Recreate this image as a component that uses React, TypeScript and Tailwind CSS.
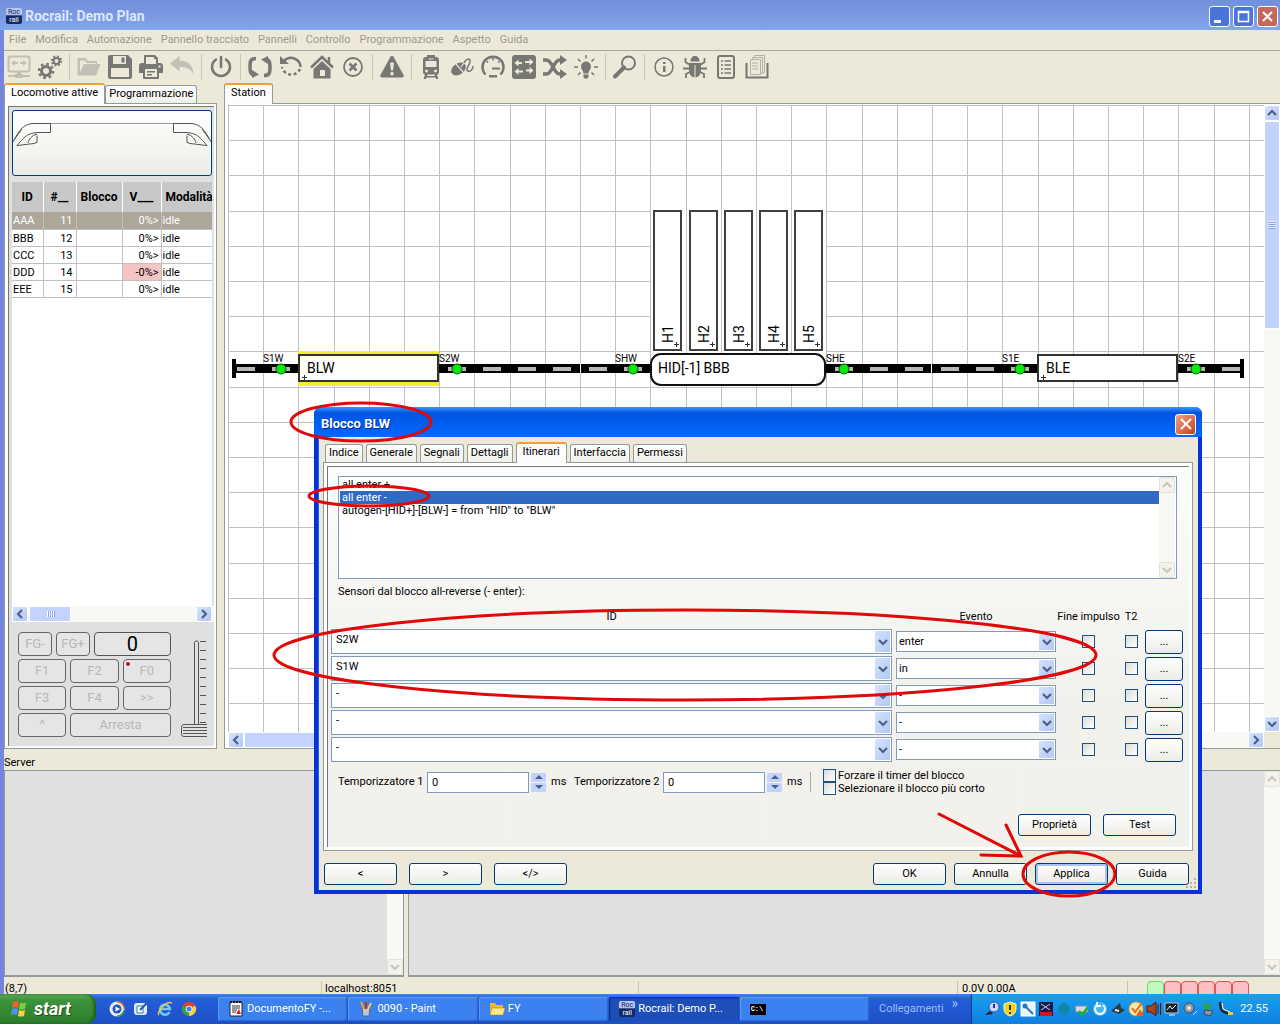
import { useState } from "react";
import type { ReactNode } from "react";

const MENUS = ["File", "Modifica", "Automazione", "Pannello tracciato", "Pannelli", "Controllo", "Programmazione", "Aspetto", "Guida"];

const LOCOS = [
  { id: "AAA", addr: 11, v: "0%>", mode: "idle" },
  { id: "BBB", addr: 12, v: "0%>", mode: "idle" },
  { id: "CCC", addr: 13, v: "0%>", mode: "idle" },
  { id: "DDD", addr: 14, v: "-0%>", mode: "idle" },
  { id: "EEE", addr: 15, v: "0%>", mode: "idle" },
];

const ROUTES = ["all enter +", "all enter -", 'autogen-[HID+]-[BLW-] = from "HID" to "BLW"'];

const SENSORS = [
  { id: "S2W", event: "enter" },
  { id: "S1W", event: "in" },
  { id: "-", event: "-" },
  { id: "-", event: "-" },
  { id: "-", event: "-" },
];

const CELL = 35.2;

/* ---------- toolbar ---------- */

type Tool = { name: string; dim?: boolean; art: ReactNode };

const TOOLS: (Tool | null)[] = [
  {
    name: "Connetti",
    dim: true,
    art: (
      <>
        <rect x="1.5" y="1.5" width="21" height="15" rx="2" fill="none" stroke="currentColor" strokeWidth="2" />
        <path d="M4 8l4-3v2h3v2H8v2zM20 8l-4-3v2h-3v2h3v2zM10 17h4v3h-4zM1 20h22v2H1zM8 19h8v4H8z" />
      </>
    ),
  },
  {
    name: "Impostazioni",
    art: (
      <>
        <circle cx="8" cy="16" r="4.5" fill="none" stroke="currentColor" strokeWidth="3" />
        <circle cx="8" cy="16" r="7" fill="none" stroke="currentColor" strokeWidth="2.5" strokeDasharray="2.7 2.8" />
        <circle cx="18.5" cy="6" r="3" fill="none" stroke="currentColor" strokeWidth="2" />
        <circle cx="18.5" cy="6" r="4.6" fill="none" stroke="currentColor" strokeWidth="2" strokeDasharray="1.8 1.8" />
      </>
    ),
  },
  null,
  {
    name: "Apri",
    dim: true,
    art: <path d="M2 3h7l2 3h9v3h-1.5V8H9.500L8 5.500H3v12l4-8.500h16.500L19 20.500H2A1.500 1.500 0 0 1 .5 19V4.500A1.500 1.500 0 0 1 2 3z" />,
  },
  {
    name: "Salva",
    art: (
      <path
        fillRule="evenodd"
        d="M2 0h18l4 4v18a2 2 0 0 1-2 2H2a2 2 0 0 1-2-2V2a2 2 0 0 1 2-2zM5 1v8h13V1zM3 13v9h18v-9zM13.5 2.5h3v5h-3z"
      />
    ),
  },
  {
    name: "Stampa",
    art: (
      <path
        fillRule="evenodd"
        d="M6 0h10l3 3v5h2a3 3 0 0 1 3 3v7h-4v5a1 1 0 0 1-1 1H5a1 1 0 0 1-1-1v-5H0v-7a3 3 0 0 1 3-3h2V1a1 1 0 0 1 1-1zM7 2v7h10V4h-2V2zM6 14v8h12v-8zM8 16h8v1.5H8zM8 19h5v1.5H8zM19.5 10.5v2h2v-2z"
      />
    ),
  },
  { name: "Annulla modifica", dim: true, art: <path d="M0 8.5L9.500 1v4.500C18 6 23 10 23.500 19 20 13 16 12 9.500 12v4.500z" /> },
  null,
  {
    name: "Alimentazione",
    art: (
      <g fill="none" stroke="currentColor" strokeWidth="2.5" strokeLinecap="round">
        <path d="M12 2v10M7 4.500a9 9 0 1 0 10 0" />
      </g>
    ),
  },
  null,
  {
    name: "Modalità automatica",
    art: (
      <>
        <path d="M8 3.500C2.500 3.500 2 6 2 12s1 7 4 8M16 20.500c5.500 0 6-2.500 6-8.500s-1-7-4-8" fill="none" stroke="currentColor" strokeWidth="3.5" />
        <path d="M4 15v8l7-3.500zM20 1v8l-7-4.500z" />
      </>
    ),
  },
  {
    name: "Ripristina",
    art: (
      <>
        <path d="M5 6a9.500 9.500 0 0 1 16.500 6" fill="none" stroke="currentColor" strokeWidth="2.5" />
        <path d="M21 14a9.500 9.500 0 0 1-18-2" fill="none" stroke="currentColor" strokeWidth="2.5" strokeDasharray="3 2.5" />
        <path d="M1 1v8h9z" />
      </>
    ),
  },
  {
    name: "Casa",
    art: (
      <>
        <path d="M1 12.500L12 2l11 10.500M19 8V2" fill="none" stroke="currentColor" strokeWidth="2.5" />
        <path fillRule="evenodd" d="M12 6l8.500 8v9.500h-17V14zM10 15v6h5v-6z" />
      </>
    ),
  },
  {
    name: "Ferma",
    art: (
      <g fill="none" stroke="currentColor" strokeWidth="1.8">
        <circle cx="12" cy="12" r="9" />
        <path d="M8.500 8.500l7 7M15.500 8.500l-7 7" strokeWidth="2.5" />
      </g>
    ),
  },
  null,
  {
    name: "Emergenza",
    art: (
      <path
        fillRule="evenodd"
        d="M12 1c1 0 1.500.5 2 1.500L23.500 20c.7 1.500 0 2.500-1.500 2.500H2C.5 22.500-.2 21.500.5 20L10 2.500C10.500 1.500 11 1 12 1zM10 7.500l1 8h2l1-8zM12 17a1.700 1.700 0 1 0 .01 0z"
      />
    ),
  },
  null,
  {
    name: "Locomotive",
    art: (
      <path
        fillRule="evenodd"
        d="M8 0h8v2h1.500c1.500 0 2.500 1 2.500 3v13l-2 2 1.500 4H17l-.5-1.500h-9L7 24H4.500L6 20l-2-2V5c0-2 1-3 2.500-3H8zM9.500 3.500v1h5v-1zM6.500 6v6h11V6zM7.500 14.500a1.500 1.500 0 1 0 .01 0zM16.500 14.500a1.500 1.500 0 1 0 .01 0zM8.500 19.500L8 21h8l-.5-1.500z"
      />
    ),
  },
  {
    name: "Mouse",
    art: (
      <>
        <ellipse cx="8.5" cy="14" rx="8" ry="5.5" transform="rotate(-35 8.5 14)" />
        <path d="M6 9l7 8M11 12l3-4" stroke="#ece9d8" strokeWidth="1.2" />
        <path d="M14 8c2-5 7-5 6-1s-5 8-2 9 5-2 5-5" fill="none" stroke="currentColor" strokeWidth="1.5" />
      </>
    ),
  },
  {
    name: "Tachimetro",
    art: (
      <>
        <path d="M4.500 19.500a10.500 10.500 0 1 1 15 0" fill="none" stroke="currentColor" strokeWidth="2.5" />
        <path d="M11 12.500h8v2h-8z" />
        <path d="M12 3v2.500M5.500 6l1.500 1.500M18.500 6L17 7.500" stroke="currentColor" strokeWidth="1.5" />
        <path d="M8 20h8v2.500H8z" />
      </>
    ),
  },
  {
    name: "Scambi",
    art: (
      <>
        <rect width="24" height="24" rx="3" />
        <path d="M2.500 8l4-3.500V7H10v2H6.500v2.500zM21.500 7l-4-3.500V6H13v2h4.500v2.500zM2.500 16.500l4-3.500v2.500H11v2H6.500V20zM21.500 15.500l-4-3.500v2.500H14v2h3.500V19z" fill="#ece9d8" />
      </>
    ),
  },
  {
    name: "Itinerari",
    art: (
      <>
        <path d="M0 5h3.500c6 0 7 14 13 14H19M0 19h3.500c6 0 7-14 13-14H19" fill="none" stroke="currentColor" strokeWidth="3.5" />
        <path d="M17 0l7 5-7 5zM17 14l7 5-7 5z" />
      </>
    ),
  },
  {
    name: "Luci",
    art: (
      <>
        <path d="M12 6.500a5 5 0 0 1 5 5c0 3-2.500 4-2.500 7h-5c0-3-2.500-4-2.500-7a5 5 0 0 1 5-5zM9.500 19.500h5V22l-1 1.500h-3l-1-1.500z" />
        <path d="M12 0v3.500M4 4l2.500 2.500M20 4l-2.500 2.500M0 12h4M20 12h4M4 20l2.500-2.500M20 20l-2.500-2.500" stroke="currentColor" strokeWidth="1.5" />
      </>
    ),
  },
  null,
  {
    name: "Cerca",
    art: (
      <>
        <circle cx="15.5" cy="8" r="6.5" fill="none" stroke="currentColor" strokeWidth="2" />
        <path d="M11 12.500l-9 9" stroke="currentColor" strokeWidth="4" strokeLinecap="round" />
      </>
    ),
  },
  null,
  {
    name: "Informazioni",
    art: (
      <>
        <circle cx="12" cy="12" r="9" fill="none" stroke="currentColor" strokeWidth="1.5" />
        <path d="M11 7h2.500v2H11zM11 11h2.500v6H11z" />
      </>
    ),
  },
  {
    name: "Debug",
    art: (
      <>
        <path d="M7.500 6.500C7.500 3 9.500 1 12 1s4.500 2 4.500 5.500zM6 8h12v6c0 5-2 8-5.500 8.500V10h-1v12.500C8 22 6 19 6 14z" />
        <path d="M7 10L2.500 7V3M17 10l4.500-3V3M7 13.500H0M17 13.500h7M7 17l-4 2v4M17 17l4 2v4" fill="none" stroke="currentColor" strokeWidth="1.8" />
      </>
    ),
  },
  {
    name: "Registro",
    art: (
      <>
        <rect x="4" y="1" width="16" height="22" rx="2" fill="none" stroke="currentColor" strokeWidth="2" />
        <path d="M7 6h2M7 10h2M7 14h2M7 18h2M10.500 6H17M10.500 10H17M10.500 14H17M10.500 18H17" stroke="currentColor" strokeWidth="1.5" />
      </>
    ),
  },
  {
    name: "Documenti",
    art: (
      <>
        <path d="M1.500 8v14.500h21V8" fill="none" stroke="currentColor" strokeWidth="2" />
        <g fill="#ece9d8" stroke="#b4b2a4">
          <path d="M9.500.5h10v17h-10z" />
          <path d="M7.500 2.500h10v16h-10z" />
          <path d="M5.500 4.500h10v15h-10z" />
        </g>
        <path d="M7 8h6M7 11h6M7 14h6" stroke="#b4b2a4" />
      </>
    ),
  },
];

function Toolbar() {
  return (
    <div className="flex h-8 items-center gap-[7px] pl-[3px]">
      {TOOLS.map((tool, i) =>
        tool ? (
          <button key={tool.name} aria-label={tool.name} className={`size-6 shrink-0 ${tool.dim ? "text-[#c2c0b5]" : "text-[#777773]"}`}>
            <svg viewBox="0 0 24 24" className="size-6" fill="currentColor">
              {tool.art}
            </svg>
          </button>
        ) : (
          <span key={i} className="h-[26px] w-px bg-[#c9c6b4]" />
        ),
      )}
    </div>
  );
}

/* ---------- small shared controls ---------- */

const ARROWS = {
  up: "M4 10l4-4 4 4",
  down: "M4 6l4 4 4-4",
  left: "M10 4L6 8l4 4",
  right: "M6 4l4 4-4 4",
};

function ScrollButton({ dir, off }: { dir: keyof typeof ARROWS; off?: boolean }) {
  return (
    <button
      aria-label={dir}
      className={`size-4 shrink-0 rounded-[2px] border ${
        off ? "border-[#e4e2d8] bg-[#f3f2ec] text-[#c9c7ba]" : "border-white bg-linear-to-br from-[#d5e1fe] to-[#b4c8f6] text-[#4d6185]"
      }`}
    >
      <svg viewBox="1 1 14 14" className="size-full" fill="none" stroke="currentColor" strokeWidth="2.2">
        <path d={ARROWS[dir]} />
      </svg>
    </button>
  );
}

function VScroll({ off, children }: { off?: boolean; children?: ReactNode }) {
  return (
    <div className="flex w-4 shrink-0 flex-col bg-[#f8f8f4]">
      <ScrollButton dir="up" off={off} />
      <div className="min-h-0 flex-1">{children}</div>
      <ScrollButton dir="down" off={off} />
    </div>
  );
}

function XpButton({ children, className = "w-[73px] h-[22px]", focused }: { children: ReactNode; className?: string; focused?: boolean }) {
  return (
    <button
      className={`shrink-0 rounded-[3px] border border-[#003c74] bg-linear-to-b from-white to-[#ecebe5] text-center ${className} ${
        focused ? "shadow-[inset_0_0_0_2px_#a9c4f0]" : ""
      }`}
    >
      {children}
    </button>
  );
}

function Combo({ label, value, className }: { label: string; value: string; className: string }) {
  return (
    <div className="relative flex">
      <select aria-label={label} defaultValue={value} className={`w-full appearance-none border border-[#7f9db9] bg-white ${className}`}>
        <option>{value}</option>
      </select>
      <span className="pointer-events-none absolute inset-y-0.5 right-0.5 flex w-[15px] items-center justify-center bg-linear-to-br from-[#d5e1fe] to-[#b4c8f6] text-[#4d6185]">
        <svg viewBox="3 4 10 8" className="h-2 w-2.5" fill="none" stroke="currentColor" strokeWidth="2.2">
          <path d={ARROWS.down} />
        </svg>
      </span>
    </div>
  );
}

function Check({ label }: { label: string }) {
  return <input type="checkbox" aria-label={label} className="block size-[13px] shrink-0 appearance-none border border-[#1c5180] bg-linear-to-br from-[#dcdcd7] to-white" />;
}

function Tab({ children, active, onClick }: { children: ReactNode; active?: boolean; onClick?: () => void }) {
  return (
    <button
      role="tab"
      aria-selected={!!active}
      onClick={onClick}
      className={`shrink-0 rounded-t-[3px] border border-b-0 border-[#919b9c] ${
        active ? "z-10 -mb-px h-[21px] border-t-2 border-t-[#f0a030] bg-[#fcfcfe] px-1.5 pb-0.5" : "h-[18px] bg-linear-to-b from-white to-[#f0f0ea] px-[3px]"
      }`}
    >
      {children}
    </button>
  );
}

function RocLogo() {
  return (
    <span className="flex size-4 shrink-0 flex-col items-center overflow-hidden rounded-[2px] bg-linear-to-b from-[#b8c8f0] from-40% to-[#142a66] to-50% text-[7px] leading-2">
      <span className="text-[#101c50]">Roc</span>
      <span className="text-white">rail</span>
    </span>
  );
}

/* ---------- locomotive panel ---------- */

const PAD = "h-6 rounded-[4px] border border-[#666] bg-[#e5e5e5] text-[13px] text-[#b8b8b8]";

function Throttle() {
  return (
    <div className="flex flex-1 gap-2.5 bg-[#e0e0e0] pt-2.5 pl-1.5">
      <div className="grid w-[153px] grid-cols-12 content-start gap-x-1 gap-y-[3px]">
        <div className="col-span-12 flex gap-1">
          <button className={`${PAD} w-[34px]`}>FG-</button>
          <button className={`${PAD} w-[34px]`}>FG+</button>
          <button className="h-6 flex-1 rounded-[4px] border border-[#555] bg-[#e5e5e5] text-xl leading-5 text-black">0</button>
        </div>
        <button className={`${PAD} col-span-4`}>F1</button>
        <button className={`${PAD} col-span-4`}>F2</button>
        <button className={`${PAD} relative col-span-4`}>
          <span className="absolute top-0.5 left-0.5 size-1 rounded-full bg-[#d01010]" />
          F0
        </button>
        <button className={`${PAD} col-span-4`}>F3</button>
        <button className={`${PAD} col-span-4`}>F4</button>
        <button className={`${PAD} col-span-4`}>&gt;&gt;</button>
        <button className={`${PAD} col-span-4`}>^</button>
        <button className={`${PAD} col-span-8`}>Arresta</button>
      </div>
      <svg className="mt-2 h-[98px] w-[26px]" viewBox="0 0 26 98" fill="none" stroke="#555" role="img" aria-label="Velocità">
        <path d="M13.500 85V2.500q0-1.500 2-1.500t2 1.500V85" />
        {Array.from({ length: 10 }, (_, i) => (
          <path key={i} d={`M19 ${i * 9 + 1.5}h6`} />
        ))}
        <path d="M26 84.500H3q-2.500 0-2.500 3v7q0 2 2.500 2h23M2 87.500h24M2 90.500h24M2 93.500h24" />
      </svg>
    </div>
  );
}

const CELL_LINE = "border-r border-b border-[#c0c0c0] p-0 pt-px";

function LocoPanel() {
  return (
    <section className="flex w-[213px] shrink-0 flex-col">
      <div role="tablist" className="flex items-end">
        <Tab active>Locomotive attive</Tab>
        <Tab>Programmazione</Tab>
      </div>
      <div className="flex flex-1 border border-[#919b9c] bg-white pt-0.5 pr-0.5 pb-0.5 pl-[3px]">
        <div className="flex min-w-0 flex-1 flex-col border-t border-l border-[#777] bg-[#e0e0e0] pt-[3px] pl-[3px]">
          <button aria-label="Immagine locomotiva" className="mr-0.5 h-[66px] rounded-[3px] border border-[#003c74] bg-linear-to-b from-white to-[#ecece6]">
            <svg viewBox="0 0 198 64" className="h-full w-full" fill="none" stroke="#555">
              <path d="M37 12.500H161" stroke="#999" />
              <path d="M37.500 12.500v9H25C13 22 10 28 4 34.500l17-2 3-1v-7M37.500 12.500H19C9 14 6 20 0 31M9 18l-8 11M24 23c-6 2-8 5-9 9" />
              <path d="M160.500 12.500v9H173c12 .5 15 6.500 21 13l-17-2-3-1v-7M160.500 12.500H179c10 1.500 13 7.500 19 18.500M189 18l8 11M174 23c6 2 8 5 9 9" />
            </svg>
          </button>
          <div className="mt-1.5 mr-0.5 flex-1 overflow-hidden bg-white">
            <table className="w-[221px] table-fixed border-collapse">
              <colgroup>
                <col className="w-[31px]" />
                <col className="w-[33px]" />
                <col className="w-[46px]" />
                <col className="w-[39px]" />
                <col />
              </colgroup>
              <thead className="bg-[#c8c8c8]">
                <tr className="h-[30px]">
                  {["ID", "#__", "Blocco", "V___", "Modalità"].map((h) => (
                    <th key={h} className="border-r border-white p-0 text-xs font-bold last:pl-1 last:text-left">
                      {h}
                    </th>
                  ))}
                </tr>
              </thead>
              <tbody>
                {LOCOS.map((l, i) => (
                  <tr key={l.id} className={`h-[17px] leading-[15px] ${i === 0 ? "bg-[#aca899] text-white" : ""}`}>
                    <td className={`${CELL_LINE} pl-px`}>{l.id}</td>
                    <td className={`${CELL_LINE} pr-[3px] text-right`}>{l.addr}</td>
                    <td className={CELL_LINE} />
                    <td className={`${CELL_LINE} pr-0.5 text-right ${l.v.startsWith("-") ? "bg-[#f4c4c4]" : ""}`}>{l.v}</td>
                    <td className={`${CELL_LINE} pl-px`}>{l.mode}</td>
                  </tr>
                ))}
              </tbody>
            </table>
          </div>
          <div className="flex h-4 gap-px bg-[#f8f8f4]">
            <ScrollButton dir="left" />
            <div className="flex w-[42px] items-center justify-center gap-px rounded-[2px] border border-white bg-[#c3d3fd]">
              {[0, 1, 2, 3].map((n) => (
                <span key={n} className="h-1.5 w-px bg-white shadow-[1px_0_0_#8ca4dc]" />
              ))}
            </div>
            <div className="mr-0.5 ml-auto flex">
              <ScrollButton dir="right" />
            </div>
          </div>
          <div className="flex h-[124px]">
            <Throttle />
          </div>
        </div>
      </div>
    </section>
  );
}

/* ---------- track plan ---------- */

const TRACKS = [
  { x: 5, w: 65 },
  { x: 211, w: 212 },
  { x: 597, w: 212 },
  { x: 949, w: 64 },
];

const PLAN_SENSORS = [
  { name: "S1W", cell: 1 },
  { name: "S2W", cell: 6 },
  { name: "SHW", cell: 11 },
  { name: "SHE", cell: 17 },
  { name: "S1E", cell: 22 },
  { name: "S2E", cell: 27 },
];

function Plan() {
  return (
    <svg className="h-full w-full" role="img" aria-label="Station">
      <g fill="#c0c0c0" shapeRendering="crispEdges">
        {Array.from({ length: 60 }, (_, i) => (
          <rect key={`v${i}`} x={Math.round(i * CELL)} y="0" width="1" height="100%" />
        ))}
        {Array.from({ length: 40 }, (_, i) => (
          <rect key={`h${i}`} x="0" y={Math.round(i * CELL)} width="100%" height="1" />
        ))}
      </g>

      {TRACKS.map((t) => (
        <rect key={t.x} x={t.x} y="259" width={t.w} height="9" />
      ))}
      <path d="M352.500 259v9M703.500 259v9" stroke="#fff" />
      <path d="M4 254h4v19H4zM1012 254h4v19h-4z" />
      {[0, 1, 6, 7, 8, 9, 10, 11, 17, 18, 19, 20, 21, 22, 27, 28].map((c) => (
        <rect key={c} x={Math.round((c + 0.5) * CELL) - 9} y="262" width="18" height="4" fill="#b8b8b8" />
      ))}
      {PLAN_SENSORS.map((s) => (
        <g key={s.name}>
          <circle cx={Math.round((s.cell + 0.5) * CELL)} cy="264" r="5" fill="#0ce80c" stroke="#0a5c0a" />
          <text x={Math.round(s.cell * CELL)} y="257" fontSize="10">
            {s.name}
          </text>
        </g>
      ))}

      {/* blocks */}
      <rect x="70" y="246" width="141" height="35" fill="#f4ee30" />
      <rect x="71" y="250" width="139" height="26" fill="#fffffa" stroke="#34342a" strokeWidth="2" />
      <text x="79" y="268" fontSize="14">BLW</text>
      <path d="M74 272.500h5M76.500 270v5" stroke="#333" />
      <rect x="810" y="250" width="139" height="26" fill="#fff" stroke="#333" strokeWidth="2" />
      <text x="818" y="268" fontSize="14">BLE</text>
      <path d="M813 272.500h5M815.500 270v5" stroke="#333" />

      {/* hidden yard */}
      <rect x="423" y="105" width="175" height="142" fill="#fff" />
      {[1, 2, 3, 4].map((n) => (
        <rect key={n} x={Math.round((12 + n) * CELL)} y="105" width="1" height="142" fill="#c8c8c8" />
      ))}
      {[1, 2, 3, 4, 5].map((n) => {
        const x = Math.round((11 + n) * CELL) + 4;
        return (
          <g key={n}>
            <rect x={x} y="106" width="27" height="139" fill="#fff" stroke="#404040" strokeWidth="2" />
            <text transform={`translate(${x + 19} 238) rotate(-90)`} fontSize="14">
              H{n}
            </text>
            <path d={`M${x + 20} 239.500h5M${x + 22.5} 237v5`} stroke="#333" />
          </g>
        );
      })}
      <rect x="423" y="249" width="174" height="31" rx="10" fill="#fff" stroke="#111" strokeWidth="2" />
      <text x="430" y="268" fontSize="14">HID[-1] BBB</text>
    </svg>
  );
}

function PlanPanel() {
  return (
    <section className="flex min-w-0 flex-1 flex-col">
      <div role="tablist" className="flex items-end">
        <Tab active>Station</Tab>
      </div>
      <div className="flex min-h-0 flex-1 flex-col border border-r-0 border-[#919b9c] bg-white pt-px pl-[3px]">
        <div className="flex min-h-0 flex-1">
          <div className="min-w-0 flex-1 overflow-hidden">
            <Plan />
          </div>
          <VScroll>
            <div className="flex h-[35%] items-center justify-center rounded-[2px] border border-white bg-[#c3d3fd]">
              <span className="h-2 w-1.5 bg-[repeating-linear-gradient(#eef4fe_0_1px,#8ca4dc_1px_2px)]" />
            </div>
          </VScroll>
        </div>
        <div className="flex h-4 bg-[#f8f8f4]">
          <ScrollButton dir="left" />
          <div className="w-1/2 rounded-[2px] border border-white bg-[#c3d3fd]" />
          <div className="ml-auto flex">
            <ScrollButton dir="right" />
          </div>
          <div className="w-4 bg-[#ece9d8]" />
        </div>
      </div>
    </section>
  );
}

/* ---------- block dialog ---------- */

function Timer({ n }: { n: number }) {
  return (
    <>
      <label htmlFor={`timer${n}`} className="w-[83px] shrink-0 whitespace-nowrap">
        Temporizzatore {n}
      </label>
      <input id={`timer${n}`} defaultValue="0" className="ml-1.5 h-[21px] w-[102px] border border-[#7f9db9] bg-white px-1" />
      <span className="ml-0.5 flex w-[15px] flex-col gap-px text-[#4d6185]">
        <button aria-label="Aumenta" className="flex h-[9px] items-center justify-center rounded-[1px] bg-[#c3d3fd]">
          <svg viewBox="0 0 8 4" className="h-1 w-2" fill="currentColor"><path d="M0 4l4-4 4 4z" /></svg>
        </button>
        <button aria-label="Diminuisci" className="flex h-[9px] items-center justify-center rounded-[1px] bg-[#c3d3fd]">
          <svg viewBox="0 0 8 4" className="h-1 w-2" fill="currentColor"><path d="M0 0l4 4 4-4z" /></svg>
        </button>
      </span>
      <span className="ml-[5px] w-[23px]">ms</span>
    </>
  );
}

function SensorRow({ n, id, event }: { n: number; id: string; event: string }) {
  return (
    <>
      <Combo label={`ID ${n}`} value={id} className="h-[25px] pb-1 pl-1" />
      <Combo label={`Evento ${n}`} value={event} className="h-[21px] pl-0.5" />
      <span className="flex justify-center">
        <Check label={`Fine impulso ${n}`} />
      </span>
      <span className="flex justify-center">
        <Check label={`T2 ${n}`} />
      </span>
      <XpButton className="h-6 w-[38px]">...</XpButton>
    </>
  );
}

function BlockDialog() {
  const [route, setRoute] = useState(1);
  const [tab, setTab] = useState("Itinerari");

  return (
    <div
      role="dialog"
      aria-label="Blocco BLW"
      className="absolute top-[407px] left-[314px] w-[888px] rounded-t-[7px] border-4 border-t-0 border-[#0831d9] bg-[#ece9d8] shadow-[inset_1px_0_0_#166aee]"
    >
      <div className="-mx-1 flex h-[30px] items-center justify-between rounded-t-[7px] bg-linear-to-b from-[#3a93ff] via-[#0054e3] via-20% to-[#0468ff] pt-1 pr-1.5 pl-[7px]">
        <h2 className="text-[13px] font-bold text-white [text-shadow:1px_1px_#0a2a80]">Blocco BLW</h2>
        <button aria-label="Chiudi" className="flex size-[21px] items-center justify-center rounded-[3px] border border-white bg-linear-to-br from-[#f0a080] to-[#c83c14]">
          <svg viewBox="0 0 12 12" className="size-3" stroke="#fff" strokeWidth="2"><path d="M1 1l10 10M11 1L1 11" /></svg>
        </button>
      </div>

      <div className="px-[5px] pt-[5px]">
        <div role="tablist" className="flex items-end gap-[3px] pl-0.5">
          {["Indice", "Generale", "Segnali", "Dettagli", "Itinerari", "Interfaccia", "Permessi"].map((t) => (
            <Tab key={t} active={t === tab} onClick={() => setTab(t)}>
              {t}
            </Tab>
          ))}
        </div>

        <div className="border border-[#919b9c] bg-white p-[3px]">
          <div className="border-t border-l border-[#777] bg-linear-to-b from-[#fcfcfc] to-[#f2f1ec] to-60% pb-[11px]">
            <div className="mt-[9px] mr-3 ml-2.5 flex h-[103px] border border-[#7f9db9] bg-white pr-px">
              <ul role="listbox" aria-label="Itinerari" className="flex-1 pt-px pl-px">
                {ROUTES.map((r, i) => (
                  <li
                    key={r}
                    role="option"
                    aria-selected={i === route}
                    onClick={() => setRoute(i)}
                    className={`h-[13px] pl-0.5 leading-[14px] ${i === route ? "bg-[#316ac5] text-white" : ""}`}
                  >
                    {r}
                  </li>
                ))}
              </ul>
              <VScroll off />
            </div>
            <p className="mt-[5px] ml-2.5 leading-4">Sensori dal blocco all-reverse (- enter):</p>

            <div className="mt-[9px] ml-[3px] grid grid-cols-[561px_160px_57px_20px_38px] items-center gap-x-1 gap-y-0.5 leading-4">
              <span className="pb-0.5 text-center">ID</span>
              <span className="pb-0.5 text-center">Evento</span>
              <span className="flex justify-center pb-0.5 whitespace-nowrap">Fine impulso</span>
              <span className="pb-0.5 text-center">T2</span>
              <span />
              {SENSORS.map((s, i) => (
                <SensorRow key={i} n={i + 1} {...s} />
              ))}
            </div>

            <div className="mt-[7px] ml-2.5 flex items-center">
              <Timer n={1} />
              <Timer n={2} />
              <span className="h-5 w-px bg-[#aca899]" />
              <div className="ml-3 leading-[13px]">
                <label className="flex gap-0.5">
                  <Check label="Forzare il timer del blocco" /> Forzare il timer del blocco
                </label>
                <label className="flex gap-0.5">
                  <Check label="Selezionare il blocco più corto" /> Selezionare il blocco più corto
                </label>
              </div>
            </div>

            <div className="mt-[19px] mr-[13px] flex justify-end gap-3">
              <XpButton>Proprietà</XpButton>
              <XpButton>Test</XpButton>
            </div>
          </div>
        </div>
      </div>

      <div className="flex gap-3 pt-3 pr-[9px] pb-[5px] pl-1.5">
        <XpButton>&lt;</XpButton>
        <XpButton>&gt;</XpButton>
        <XpButton>&lt;/&gt;</XpButton>
        <div className="ml-auto flex gap-2">
          <XpButton>OK</XpButton>
          <XpButton>Annulla</XpButton>
          <XpButton focused>Applica</XpButton>
          <XpButton>Guida</XpButton>
        </div>
      </div>
      <svg className="absolute right-0 bottom-0 size-3" fill="#b8b4a2">
        <path d="M8 0h2v2H8zM8 4h2v2H8zM4 4h2v2H4zM8 8h2v2H8zM4 8h2v2H4zM0 8h2v2H0z" />
      </svg>
    </div>
  );
}

/* ---------- hand-drawn marks ---------- */

function Marks() {
  return (
    <svg className="pointer-events-none absolute inset-0 h-full w-full" fill="none" stroke="#e00808" strokeWidth="3" strokeLinecap="round">
      <ellipse cx="361" cy="422" rx="70" ry="19" />
      <ellipse cx="369" cy="496" rx="60" ry="10" />
      <ellipse cx="685" cy="655" rx="411" ry="45" />
      <ellipse cx="1069" cy="874" rx="46" ry="22" />
      <path d="M939 814l82 42M1006 825l15 31-40-1" />
    </svg>
  );
}

/* ---------- taskbar ---------- */

const TASKS: { title: string; icon: ReactNode; active?: boolean }[] = [
  {
    title: "DocumentoFY -...",
    icon: (
      <svg viewBox="0 0 16 16" className="size-4">
        <path d="M2 1h12v14H2z" fill="#fff" stroke="#222" />
        <path d="M2 1h12" stroke="#111" strokeWidth="2" strokeDasharray="2 1" />
        <path d="M4 5h8M4 7h8M4 9h5M4 11h4" stroke="#334" />
        <path d="M8 13l3-5 2 5z" fill="#d22" />
      </svg>
    ),
  },
  {
    title: "0090 - Paint",
    icon: (
      <svg viewBox="0 0 16 16" className="size-4">
        <path d="M4 7h8l-1 8H5z" fill="#b8c8d8" stroke="#567" />
        <path d="M6 8L3 1" stroke="#e8a030" strokeWidth="2" />
        <path d="M8 8V1" stroke="#c03020" strokeWidth="2" />
        <path d="M10 8l3-6" stroke="#f0d050" strokeWidth="2" />
      </svg>
    ),
  },
  {
    title: "FY",
    icon: (
      <svg viewBox="0 0 16 16" className="size-4">
        <path d="M1 2h5l1.500 2H14v10H1z" fill="#e8b830" />
        <path d="M3 7h13l-2 7H1z" fill="#ffe88a" stroke="#a88420" strokeWidth=".6" />
      </svg>
    ),
  },
  { title: "Rocrail: Demo P...", icon: <RocLogo />, active: true },
  {
    title: "",
    icon: (
      <span className="flex h-[11px] w-4 items-center bg-black pl-px font-['Liberation_Mono',monospace] text-[7px] font-bold text-white">C:\</span>
    ),
  },
];

function QuickLaunch() {
  return (
    <div className="flex items-center gap-2">
      <button aria-label="Media Player">
        <svg viewBox="0 0 16 16" className="size-4">
          <circle cx="8" cy="8" r="7.5" fill="#e8f0f8" />
          <path d="M8 1A7 7 0 0 1 15 8" stroke="#e88020" strokeWidth="1.5" fill="none" />
          <path d="M15 9a7 7 0 0 1-7 6" stroke="#40a040" strokeWidth="1.5" fill="none" />
          <circle cx="8" cy="8" r="4.5" fill="#2458b8" />
          <path d="M6.500 5.500v5L11 8z" fill="#fff" />
        </svg>
      </button>
      <button aria-label="Mostra desktop">
        <svg viewBox="0 0 16 16" className="size-4">
          <rect x="1" y="2" width="13" height="12" rx="3" fill="#d8ecfa" />
          <path d="M4 5h6v7H4z" fill="#fff" stroke="#3478b8" />
          <path d="M7 9l7-7" stroke="#245890" strokeWidth="2" />
        </svg>
      </button>
      <button aria-label="Internet Explorer">
        <svg viewBox="0 0 16 16" className="size-4" fill="none">
          <path d="M12.500 11A5 5 0 1 1 13 8H4" stroke="#70c8f8" strokeWidth="2.5" />
          <path d="M2 14C-1 12 9-1 15 2" stroke="#f0c840" strokeWidth="1.5" />
        </svg>
      </button>
      <button aria-label="Chrome">
        <svg viewBox="0 0 16 16" className="size-4">
          <path d="M8 8L1.800 4.500a7 7 0 0 1 12.400 0z" fill="#e04030" />
          <path d="M8 8l6.200-3.500A7 7 0 0 1 8 15z" fill="#f8d040" />
          <path d="M8 8v7A7 7 0 0 1 1.800 4.500z" fill="#38a048" />
          <circle cx="8" cy="8" r="3.3" fill="#fff" />
          <circle cx="8" cy="8" r="2.5" fill="#4080e8" />
        </svg>
      </button>
    </div>
  );
}

const TRAY: ReactNode[] = [
  <><circle cx="10" cy="6" r="5" fill="#c8d8fa" stroke="#3850b0" /><path d="M10 3v4" stroke="#2038a0" strokeWidth="2" /><path d="M1 14l5-4 3 3z" fill="#223" /></>,
  <><path d="M8 1l6 2v5c0 4-3 6-6 7-3-1-6-3-6-7V3z" fill="#f8d020" stroke="#fff8c0" /><path d="M8 4v5M8 11v2" stroke="#333" strokeWidth="2" /></>,
  <><rect x="1" y="1" width="14" height="14" fill="#e8f4fc" stroke="#fff" /><path d="M5 5l8 8" stroke="#2878b8" strokeWidth="2" /><circle cx="5" cy="5" r="2.5" fill="#2878b8" /></>,
  <><rect x="1" y="1" width="14" height="14" fill="#181c48" /><path d="M3 3l9 6M3 9l9-6" stroke="#c8c8d8" /><path d="M2 11h12v4H2z" fill="#d01818" /></>,
  <circle cx="8" cy="8" r="6" fill="#1088a8" />,
  <><path d="M1 5h12l1 6H2z" fill="#d8dce0" stroke="#889" /><path d="M5 10l3 4 6-8" fill="none" stroke="#20b030" strokeWidth="2.5" /></>,
  <><circle cx="8" cy="8" r="7" fill="#48b8f4" /><path d="M11 4a5 5 0 1 1-6 0M5 1v4h4" fill="none" stroke="#fff" strokeWidth="2" /></>,
  <><path d="M1 10l9-8 1 5 4 2-6 4z" fill="#303840" /><path d="M5 9l4 1" stroke="#e0e8f0" strokeWidth="2" /></>,
  <><circle cx="8" cy="8" r="7" fill="#f8e8b0" stroke="#e0a020" /><path d="M4 7l3 4 7-9" fill="none" stroke="#e07010" strokeWidth="2" /><path d="M12 8l4 7H8z" fill="#e86010" /></>,
  <><path d="M1 5h4l5-4v14l-5-4H1z" fill="#b04020" stroke="#501808" /><path d="M12 3v10M14.500 2v12" stroke="#501808" /></>,
  <><rect x="1" y="2" width="13" height="10" fill="#182028" stroke="#b8c0c8" /><path d="M3 9l3-4 2 3 4-4M5 14h6" stroke="#e0f0f0" fill="none" /></>,
  <><circle cx="7" cy="7" r="5" fill="#909aa4" stroke="#434c54" /><circle cx="7" cy="7" r="2" fill="#dce4ec" /><path d="M11 14l4-4" stroke="#c8d4f0" /></>,
  <><path d="M3 1l9 3-3 5H4z" fill="#28a058" /><path d="M5 9l8 1-3 5-6-2z" fill="#8898a0" stroke="#445" /></>,
  <><path d="M2 1l1 7c2 4 5 4 9 4" fill="none" stroke="#1c2430" strokeWidth="2.5" /><path d="M4 2l1 6 7 3" stroke="#fff" fill="none" /><path d="M10 11h5v3h-5z" fill="#e8d030" /></>,
];

function Taskbar() {
  return (
    <footer className="flex h-[30px] shrink-0 bg-linear-to-b from-[#3f86f0] via-[#245edb] via-15% to-[#1d4fc4] text-white">
      <button className="flex w-24 shrink-0 items-center gap-1.5 rounded-r-[10px] bg-linear-to-b from-[#5cac5c] via-[#3c943c] via-20% to-[#2c7c2c] pl-2.5 text-lg font-bold italic shadow-[inset_-2px_0_3px_#1c5c1c] [text-shadow:1px_1px_1px_#1c4c1c]">
        <svg viewBox="0 0 18 18" className="size-[18px]">
          <path d="M3 2q3-1.500 6 0L8 8Q5 6.500 2 8z" fill="#f06030" />
          <path d="M10 2.500q3 1.500 6 0L15 9q-3 1-6 0z" fill="#80cc40" />
          <path d="M2 9q3-1.500 6 0l-1 6q-3-1.500-6 0z" fill="#5090f0" />
          <path d="M9 10q3 1.500 6 0l-1 6q-3 1-6 0z" fill="#fcd040" />
        </svg>
        start
      </button>
      <div className="flex w-[122px] shrink-0 pl-[13px]">
        <QuickLaunch />
      </div>
      <nav className="flex min-w-0 flex-1 gap-px py-[3px]">
        {TASKS.map((t, i) => (
          <button
            key={i}
            aria-label={t.title || "Prompt dei comandi"}
            className={`flex min-w-0 flex-1 items-center gap-[3px] rounded-[2px] pl-2.5 whitespace-nowrap ${
              t.active ? "bg-[#1e4fb8] shadow-[inset_1px_1px_2px_#0c2c80]" : "bg-[#3c81f0] shadow-[inset_1px_1px_1px_#5c9cfc,inset_-1px_-1px_1px_#2c64d0]"
            }`}
          >
            {t.icon}
            {t.title}
          </button>
        ))}
      </nav>
      <div className="flex w-[102px] shrink-0 items-center gap-2 pl-2.5 text-[#9cbcf8]">
        Collegamenti <span className="pb-3 text-sm">»</span>
      </div>
      <div className="flex w-[309px] shrink-0 items-center border-l border-[#0a3c90] bg-linear-to-b from-[#18a0f0] to-[#1080e0] pl-3">
        {TRAY.map((art, i) => (
          <svg key={i} viewBox="0 0 16 16" className="mr-0.5 size-4 shrink-0">
            {art}
          </svg>
        ))}
        <time className="ml-auto pr-3">22.55</time>
      </div>
    </footer>
  );
}

/* ---------- main window ---------- */

function TitleBar() {
  return (
    <header className="flex h-[30px] shrink-0 items-center gap-[3px] bg-linear-to-b from-[#7090dc] via-[#7b97e0] via-50% to-[#80a8ec] pt-0.5 pr-0.5 pl-1.5">
      <RocLogo />
      <h1 className="text-sm font-bold text-[#dce6fb]">Rocrail: Demo Plan</h1>
      <div className="ml-auto flex gap-[3px]">
        <button aria-label="Riduci a icona" className="size-[21px] rounded-[3px] border border-white bg-[#4a74dc]">
          <svg viewBox="0 0 19 19" className="size-full"><path d="M4 13h7v3H4z" fill="#fff" /></svg>
        </button>
        <button aria-label="Ingrandisci" className="size-[21px] rounded-[3px] border border-white bg-[#4a74dc]">
          <svg viewBox="0 0 19 19" className="size-full" fill="none" stroke="#fff"><path d="M4.500 4.500h10v10h-10zM4 5.500h11" strokeWidth="1.5" /></svg>
        </button>
        <button aria-label="Chiudi finestra" className="size-[21px] rounded-[3px] border border-white bg-[#c4685c]">
          <svg viewBox="0 0 19 19" className="size-full" stroke="#fff" strokeWidth="2"><path d="M5 5l9 9M14 5l-9 9" /></svg>
        </button>
      </div>
    </header>
  );
}

function StatusBar() {
  return (
    <div className="flex h-[17px] shrink-0 overflow-hidden bg-[#ece9d8] pt-1 leading-4">
      <span className="w-[317px] pl-px">(8,7)</span>
      <span className="w-[317px] border-l border-[#c8c5b2] pl-[3px]">localhost:8051</span>
      <span className="flex-1 border-l border-[#c8c5b2]" />
      <span className="w-[170px] border-l border-[#c8c5b2] pl-1">0.0V 0.00A</span>
      <span className="flex w-[153px] border-l border-[#c8c5b2] pl-[19px]">
        <i className="h-5 w-[17px] rounded-[4px] border border-[#70d870] bg-[#c0f8c0]" />
        {[0, 1, 2, 3, 4].map((n) => (
          <i key={n} className="h-5 w-[17px] rounded-[4px] border border-[#d85858] bg-[#fcc0c4]" />
        ))}
      </span>
    </div>
  );
}

export default function App() {
  return (
    <div className="relative flex h-screen flex-col overflow-hidden bg-[#ece9d8] font-['Roboto',sans-serif] text-[11px] text-black">
      <TitleBar />
      <div className="flex min-h-0 flex-1 flex-col border-l-4 border-[#7486dc]">
        <nav className="flex h-[21px] shrink-0 items-center gap-[9px] border-b border-[#aca899] pl-[5px] text-[#9c9a8c]">
          {MENUS.map((m) => (
            <button key={m}>{m}</button>
          ))}
        </nav>
        <Toolbar />
        <main className="flex min-h-0 flex-1 gap-[7px]">
          <LocoPanel />
          <PlanPanel />
        </main>
        <h2 className="h-[21px] shrink-0 pt-1.5 leading-4">Server</h2>
        <div className="flex h-[207px] shrink-0 gap-1">
          <div className="flex w-[400px] justify-end border border-b-2 border-[#919b9c] bg-[#e0e0e0]">
            <VScroll off />
          </div>
          <div className="flex flex-1 justify-end border border-r-0 border-b-2 border-[#919b9c] bg-[#e0e0e0]">
            <VScroll off />
          </div>
        </div>
        <StatusBar />
      </div>
      <Taskbar />
      <BlockDialog />
      <Marks />
    </div>
  );
}
